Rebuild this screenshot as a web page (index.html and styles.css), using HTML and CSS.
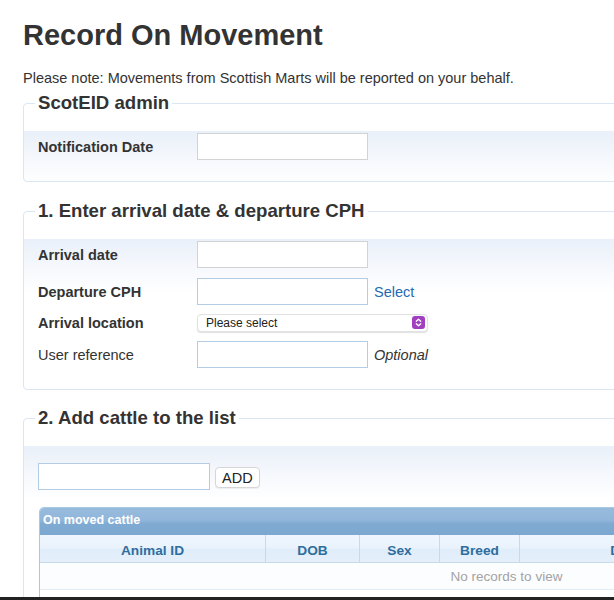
FILE: index.html
```html
<!DOCTYPE html>
<html lang="en">
<head>
<meta charset="utf-8">
<title>Record On Movement</title>
<link rel="stylesheet" href="styles.css">
</head>
<body>
<div class="page">
  <h1 class="title">Record On Movement</h1>
  <p class="note">Please note: Movements from Scottish Marts will be reported on your behalf.</p>

  <fieldset class="panel">
    <legend class="panel-legend">ScotEID admin</legend>
    <div class="form-row">
      <label class="lbl lbl-strong">Notification Date</label>
      <input class="txt" type="text">
    </div>
  </fieldset>

  <fieldset class="panel">
    <legend class="panel-legend">1. Enter arrival date &amp; departure CPH</legend>
    <div class="form-row form-row-first">
      <label class="lbl lbl-strong">Arrival date</label>
      <input class="txt" type="text">
    </div>
    <div class="form-row">
      <label class="lbl lbl-strong">Departure CPH</label>
      <input class="txt txt-blue" type="text">
      <a class="link" href="#">Select</a>
    </div>
    <div class="form-row form-row-select">
      <label class="lbl lbl-strong">Arrival location</label>
      <div class="select">
        <span class="select-text">Please select</span>
        <svg class="select-icon" width="13" height="13" viewBox="0 0 13 13">
          <rect x="0" y="0" width="13" height="13" rx="3" fill="#a23fc0"/>
          <path d="M4.3 5.2 L6.5 3.2 L8.7 5.2" fill="none" stroke="#fff" stroke-width="1.3" stroke-linecap="round" stroke-linejoin="round"/>
          <path d="M4.3 7.8 L6.5 9.8 L8.7 7.8" fill="none" stroke="#fff" stroke-width="1.3" stroke-linecap="round" stroke-linejoin="round"/>
        </svg>
      </div>
    </div>
    <div class="form-row form-row-last">
      <label class="lbl">User reference</label>
      <input class="txt txt-blue" type="text">
      <span class="hint">Optional</span>
    </div>
  </fieldset>

  <fieldset class="panel panel-last">
    <legend class="panel-legend">2. Add cattle to the list</legend>
    <div class="add-row">
      <input class="txt txt-blue txt-add" type="text">
      <button class="btn" type="button">ADD</button>
    </div>
    <div class="grid">
      <div class="grid-caption">On moved cattle</div>
      <div class="grid-head">
        <div class="gh gh-id">Animal ID</div>
        <div class="gh gh-dob">DOB</div>
        <div class="gh gh-sex">Sex</div>
        <div class="gh gh-breed">Breed</div>
        <div class="gh gh-date">Date</div>
        <div class="gh gh-rest">Status</div>
      </div>
      <div class="grid-empty">No records to view</div>
      <div class="grid-foot"></div>
    </div>
  </fieldset>
</div>
<div class="edge"></div>
</body>
</html>
```

FILE: styles.css
```css
html {
  overflow: hidden;
}

body {
  margin: 0;
  background: #fff;
  color: #333;
  font-family: "Liberation Sans", Arial, Helvetica, sans-serif;
}

.page {
  width: 980px;
  padding-left: 23px;
}

.title {
  margin: 0;
  padding-top: 17px;
  font-size: 29px;
  line-height: 36px;
  font-weight: bold;
  color: #333;
}

.note {
  margin: 15px 0 0;
  font-size: 14.5px;
  line-height: 20px;
}

.panel {
  margin: 4px 0 18px;
  padding: 19px 14px 21px;
  border: 1px solid #dbe6f3;
  border-radius: 4px;
  min-width: 0;
  background: linear-gradient(to bottom, #fff 0, #fff 27px, #e9f0f9 27px, #f4f7fc 52px, #fff 80px);
}

.panel + .panel {
  margin-top: 0;
}

.panel-last {
  margin-top: -1px;
  margin-bottom: 0;
  padding-top: 34px;
  padding-bottom: 0;
}

.panel + .panel-last {
  margin-top: -1px;
}

.panel-legend {
  margin-left: -3px;
  padding: 0 3px;
  font-size: 18.6px;
  line-height: 22px;
  font-weight: bold;
  color: #333;
}

.form-row {
  display: flex;
  align-items: center;
  height: 27px;
}

.form-row-first {
  margin-bottom: 10px;
}

.form-row-select {
  margin-top: 4px;
}

.form-row-last {
  margin-top: 5px;
}

.lbl {
  width: 159px;
  flex: none;
  font-size: 14.5px;
}

.lbl-strong {
  font-weight: bold;
}

.txt {
  box-sizing: border-box;
  width: 171px;
  height: 27px;
  margin: 0;
  padding: 2px 4px;
  border: 1px solid #d3d3d3;
  border-radius: 0;
  background: #fff;
  font: 14px "Liberation Sans", Arial, sans-serif;
  outline: none;
}

.txt-blue {
  border-color: #b4cde6;
}

.link {
  margin-left: 6px;
  font-size: 14.5px;
  color: #2569b3;
  text-decoration: none;
}

.hint {
  margin-left: 6px;
  font-size: 14.5px;
  font-style: italic;
  color: #333;
}

.select {
  box-sizing: border-box;
  display: flex;
  align-items: center;
  justify-content: space-between;
  width: 231px;
  height: 18px;
  padding: 0 2px 0 8px;
  border: 1px solid #e2e2e2;
  border-radius: 4px;
  background: #fff;
  box-shadow: 0 1px 1px rgba(0, 0, 0, 0.12);
}

.select-text {
  font-size: 12px;
  color: #222;
}

.select-icon {
  display: block;
}

.add-row {
  display: flex;
  align-items: center;
}

.txt-add {
  width: 172px;
}

.btn {
  margin: 2px 0 0 5px;
  height: 21px;
  padding: 0 6px;
  border: 1px solid #d6d6d6;
  border-radius: 4px;
  background: #fff;
  color: #222;
  font: 14.5px "Liberation Sans", Arial, sans-serif;
  box-shadow: 0 1px 1px rgba(0, 0, 0, 0.06);
}

.grid {
  width: 933px;
  margin: 17px 0 0 1px;
  border: 1px solid #a6c9e2;
  border-bottom: none;
  border-radius: 5px 5px 0 0;
  overflow: hidden;
}

.grid-caption {
  height: 27px;
  padding-left: 3px;
  font-size: 12.5px;
  font-weight: bold;
  line-height: 25px;
  color: #fff;
  background: linear-gradient(to bottom, #98bbdc 0%, #90b6da 45%, #80aad2 58%, #7ba7d0 100%);
}

.grid-head {
  display: flex;
  height: 27px;
  border-bottom: 1px solid #c5dbec;
  background: linear-gradient(to bottom, #eef5fd 0%, #eaf3fc 48%, #e0edfa 52%, #e4effa 100%);
}

.gh {
  flex: none;
  box-sizing: border-box;
  padding-top: 4px;
  border-right: 1px solid #c5dbec;
  text-align: center;
  font-size: 13.7px;
  font-weight: bold;
  line-height: 23px;
  color: #2e6e9e;
}

.gh-id { width: 226px; }
.gh-dob { width: 94px; }
.gh-sex { width: 80px; }
.gh-breed { width: 80px; }
.gh-date { width: 211px; }
.gh-rest { flex: 1; border-right: none; }

.grid-empty {
  height: 26px;
  border-bottom: 1px solid #e3ebf4;
  text-align: center;
  font-size: 13.5px;
  line-height: 27px;
  color: #a3a3a3;
  background: #fcfdfe;
}

.grid-foot {
  height: 20px;
}

.edge {
  position: fixed;
  left: 0;
  right: 0;
  bottom: 0;
  height: 3px;
  background: #222;
}
```
